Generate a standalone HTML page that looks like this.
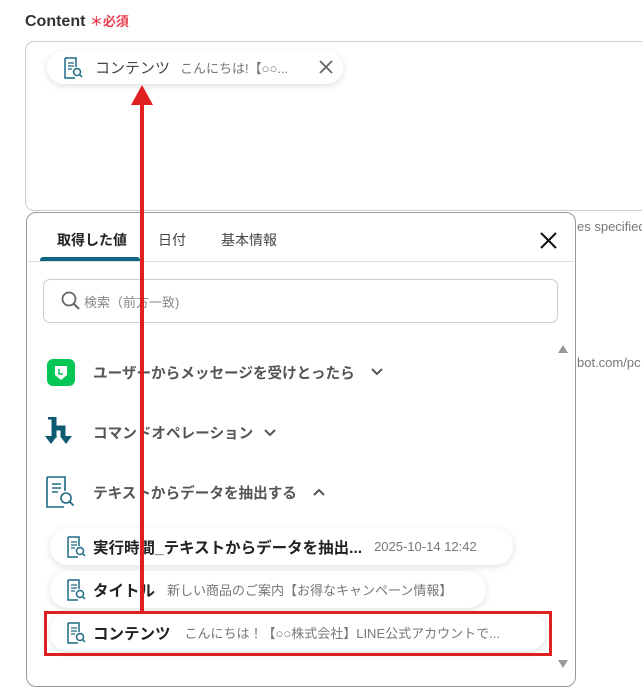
<!DOCTYPE html>
<html><head><meta charset="utf-8"><style>
*{box-sizing:border-box;margin:0;padding:0}
body{width:642px;height:688px;overflow:hidden;background:#fff;font-family:"Liberation Sans","Noto Sans CJK JP",sans-serif;position:relative;color:#333}
.a{position:absolute;white-space:nowrap}
.chip{position:absolute;background:#fff;border-radius:18px;box-shadow:0 2px 8px rgba(0,0,0,.12);display:flex;align-items:center}
.ic{width:20px;height:22px}
</style></head><body>
<div class="a" style="left:25px;top:11px;font-size:16px;font-weight:bold;color:#333">Content <span style="color:#e8404f;font-size:13px">＊必須</span></div>
<div class="a" style="left:25px;top:41px;width:640px;height:170px;border:1px solid #ccc;border-radius:9px"></div>
<div class="chip" style="left:47px;top:51px;width:296px;height:33px">
<svg class="ic" style="margin-left:16px" viewBox="0 0 20 22"><path d="M2 1h11v9M2 1v20h10" fill="none" stroke="#1d6b85" stroke-width="1.5"/><path d="M5 6h6M5 9h6M5 12h4" stroke="#1d6b85" stroke-width="1.3"/><circle cx="14" cy="15" r="3.5" fill="none" stroke="#1d6b85" stroke-width="1.5"/><path d="M16.5 17.5l2.5 2.5" stroke="#1d6b85" stroke-width="1.5"/></svg>
<span style="margin-left:12px;font-size:15px;color:#444">コンテンツ</span><span style="margin-left:10px;font-size:13px;color:#777">こんにちは!【○○...</span>
<svg style="position:absolute;left:272px;top:9px" width="14" height="14"><path d="M1 1L13 13M13 1L1 13" stroke="#666" stroke-width="1.8"/></svg></div>
<div class="a" style="left:577px;top:219px;font-size:13px;color:#777">es specified</div>
<div class="a" style="left:577px;top:355px;font-size:13px;color:#777">bot.com/pc</div>
<div class="a" style="left:26px;top:212px;width:550px;height:475px;border:1px solid #999;border-radius:10px;background:#fff"></div>
<div class="a" style="left:57px;top:230px;font-size:14px;font-weight:bold;color:#222">取得した値</div>
<div class="a" style="left:158px;top:230px;font-size:14px;color:#444">日付</div>
<div class="a" style="left:221px;top:230px;font-size:14px;color:#444">基本情報</div>
<div class="a" style="left:40px;top:257px;width:100px;height:4px;background:#0e6680;border-radius:3px 3px 0 0"></div>
<div class="a" style="left:28px;top:261px;width:546px;height:1px;background:#ddd"></div>
<svg class="a" style="left:540px;top:232px" width="17" height="17"><path d="M1 1L16 16M16 1L1 16" stroke="#111" stroke-width="2"/></svg>
<div class="a" style="left:43px;top:279px;width:515px;height:44px;border:1px solid #ccc;border-radius:7px"></div>
<svg class="a" style="left:61px;top:291px" width="20" height="20"><circle cx="8" cy="8" r="6.5" fill="none" stroke="#666" stroke-width="1.8"/><path d="M12.5 12.5L18 18" stroke="#666" stroke-width="2"/></svg>
<div class="a" style="left:84px;top:292px;font-size:13px;color:#888">検索（前方一致)</div>
<svg class="a" style="left:558px;top:345px" width="10" height="8"><path d="M0 8L5 0L10 8Z" fill="#999"/></svg>
<svg class="a" style="left:558px;top:660px" width="10" height="8"><path d="M0 0L5 8L10 0Z" fill="#999"/></svg>
<svg class="a" style="left:47px;top:359px" width="28" height="27"><rect width="28" height="27" rx="6" fill="#06c755"/><path d="M8 7h12v9l-6 5l-6-5z" fill="#fff"/><path d="M12 10v5h4" stroke="#06c755" stroke-width="1.5" fill="none"/></svg>
<div class="a" style="left:93px;top:362px;font-size:14.6px;font-weight:bold;color:#555">ユーザーからメッセージを受けとったら</div>
<svg class="a" style="left:371px;top:368px" width="12" height="8"><path d="M1 1l5 5l5-5" stroke="#555" stroke-width="2" fill="none"/></svg>
<svg class="a" style="left:45px;top:417px" width="30" height="30"><path d="M3 0h6v11h9v8M9 11v10" stroke="#0e5a73" stroke-width="5" fill="none"/><path d="M0 19h12l-6 8zM15 19h12l-6 8z" fill="#0e5a73"/></svg>
<div class="a" style="left:93px;top:422px;font-size:14.6px;font-weight:bold;color:#555">コマンドオペレーション</div>
<svg class="a" style="left:264px;top:429px" width="12" height="8"><path d="M1 1l5 5l5-5" stroke="#555" stroke-width="2" fill="none"/></svg>
<svg class="a" style="left:46px;top:476px" width="30" height="32"><path d="M1 1h18v14M1 1v30h17" fill="none" stroke="#1d6b85" stroke-width="1.6"/><path d="M6 8h9M6 12h9M6 16h6" stroke="#1d6b85" stroke-width="1.5"/><circle cx="20" cy="22" r="5" fill="none" stroke="#1d6b85" stroke-width="1.6"/><path d="M23.5 25.5l4 4" stroke="#1d6b85" stroke-width="1.8"/></svg>
<div class="a" style="left:93px;top:482px;font-size:14.6px;font-weight:bold;color:#555">テキストからデータを抽出する</div>
<svg class="a" style="left:313px;top:488px" width="12" height="8"><path d="M1 7l5-5l5 5" stroke="#555" stroke-width="2" fill="none"/></svg>
<div class="chip" style="left:50px;top:528px;width:463px;height:37px"><svg class="ic" style="margin-left:16px" viewBox="0 0 20 22"><path d="M2 1h11v9M2 1v20h10" fill="none" stroke="#1d6b85" stroke-width="1.5"/><path d="M5 6h6M5 9h6M5 12h4" stroke="#1d6b85" stroke-width="1.3"/><circle cx="14" cy="15" r="3.5" fill="none" stroke="#1d6b85" stroke-width="1.5"/><path d="M16.5 17.5l2.5 2.5" stroke="#1d6b85" stroke-width="1.5"/></svg><span style="margin-left:7px;font-size:15.5px;font-weight:bold;color:#222">実行時間_テキストからデータを抽出...</span><span style="margin-left:12px;font-size:13px;color:#777">2025-10-14 12:42</span></div>
<div class="chip" style="left:50px;top:571px;width:436px;height:37px"><svg class="ic" style="margin-left:16px" viewBox="0 0 20 22"><path d="M2 1h11v9M2 1v20h10" fill="none" stroke="#1d6b85" stroke-width="1.5"/><path d="M5 6h6M5 9h6M5 12h4" stroke="#1d6b85" stroke-width="1.3"/><circle cx="14" cy="15" r="3.5" fill="none" stroke="#1d6b85" stroke-width="1.5"/><path d="M16.5 17.5l2.5 2.5" stroke="#1d6b85" stroke-width="1.5"/></svg><span style="margin-left:7px;font-size:15.5px;font-weight:bold;color:#222">タイトル</span><span style="margin-left:12px;font-size:13px;color:#777">新しい商品のご案内【お得なキャンペーン情報】</span></div>
<div class="chip" style="left:50px;top:614px;width:496px;height:37px"><svg class="ic" style="margin-left:16px" viewBox="0 0 20 22"><path d="M2 1h11v9M2 1v20h10" fill="none" stroke="#1d6b85" stroke-width="1.5"/><path d="M5 6h6M5 9h6M5 12h4" stroke="#1d6b85" stroke-width="1.3"/><circle cx="14" cy="15" r="3.5" fill="none" stroke="#1d6b85" stroke-width="1.5"/><path d="M16.5 17.5l2.5 2.5" stroke="#1d6b85" stroke-width="1.5"/></svg><span style="margin-left:7px;font-size:15.5px;font-weight:bold;color:#222">コンテンツ</span><span style="margin-left:14px;font-size:13px;color:#777">こんにちは！【○○株式会社】LINE公式アカウントで...</span></div>
<div class="a" style="left:44px;top:611px;width:508px;height:45px;border:3px solid #e02020"></div>
<div class="a" style="left:140px;top:102px;width:4px;height:510px;background:#e02020"></div>
<svg class="a" style="left:131px;top:85px" width="22" height="20"><path d="M11 0L22 20H0Z" fill="#e02020"/></svg>
</body></html>
